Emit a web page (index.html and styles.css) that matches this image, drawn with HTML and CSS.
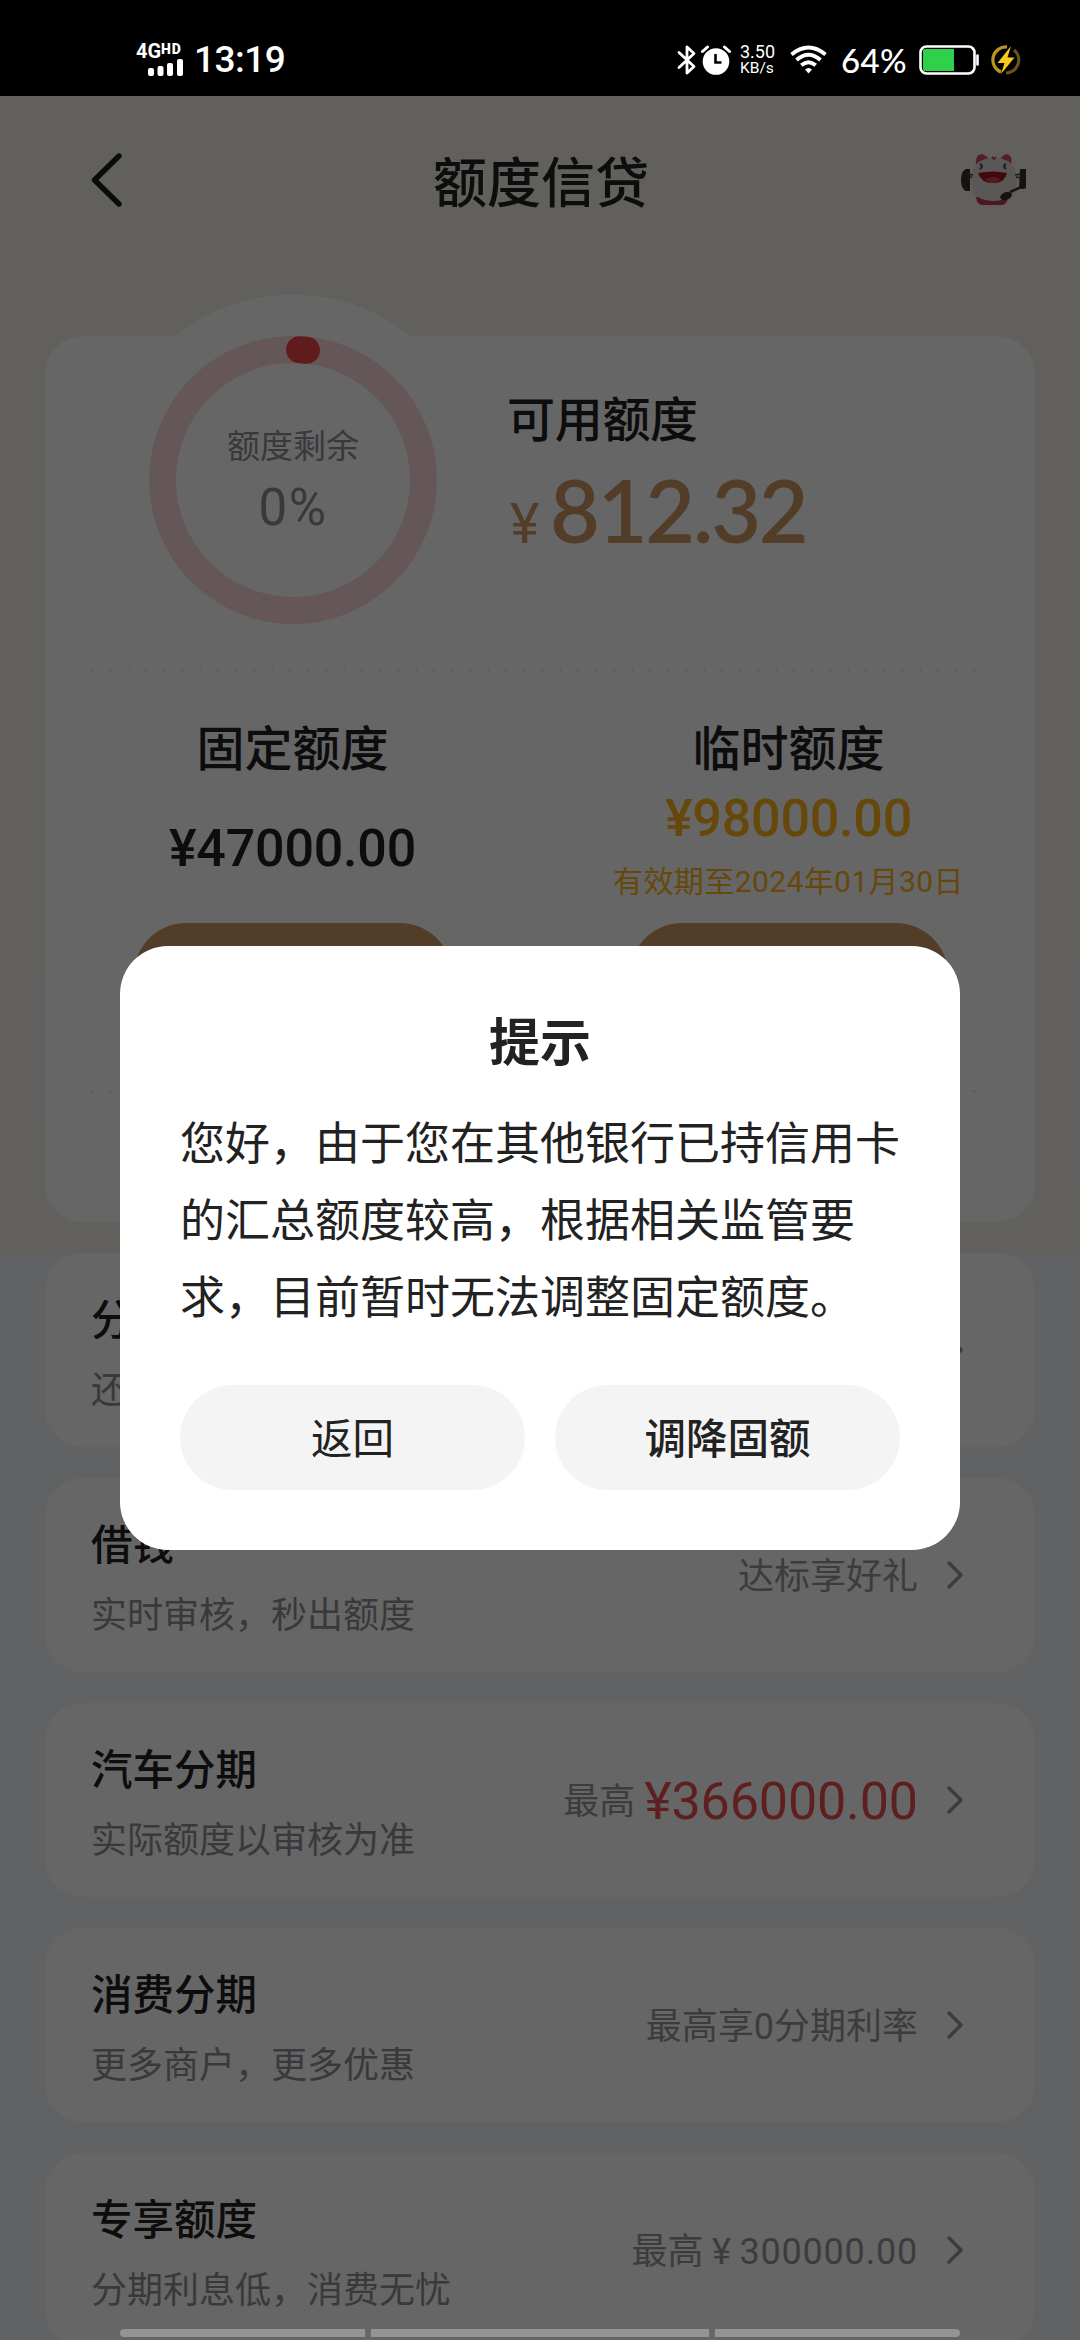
FILE: index.html
```html
<!DOCTYPE html>
<html lang="zh-CN">
<head>
<meta charset="utf-8">
<title>额度信贷</title>
<link rel="stylesheet" href="styles.css">
</head>
<body>
<div class="phone">
  <header class="status">
    <div class="status-left">
      <div class="signal">
        <div class="net"><span class="net-4g">4G</span><span class="net-hd">HD</span></div>
        <svg class="bars" width="36" height="17" viewBox="0 0 36 17" fill="#fff"><rect x="0" y="9" width="6" height="8" rx="2"/><rect x="9.5" y="7" width="6" height="10" rx="2"/><rect x="19" y="4" width="6" height="13" rx="2"/><rect x="29" y="0" width="6" height="17" rx="2"/></svg>
      </div>
      <span class="clock">13:19</span>
    </div>
    <div class="status-right">
      <svg class="bt" width="20" height="30" viewBox="0 0 20 30" fill="none" stroke="#fff" stroke-width="2.8" stroke-linejoin="round" stroke-linecap="round"><path d="M2 7.500L17 21.500L10 28V2L17 8.500L2 22.500"/></svg>
      <svg class="alarm" width="30" height="30" viewBox="0 0 30 30"><circle cx="15" cy="16.500" r="13.300" fill="#fff"/><path d="M1.500 6.500L6.500 2M28.500 6.500L23.500 2" stroke="#fff" stroke-width="3" stroke-linecap="round"/><path d="M14.500 9V17.500H20.500" fill="none" stroke="#000" stroke-width="2.600"/></svg>
      <div class="speed"><span>3.50</span><span>KB/s</span></div>
      <svg class="wifi" width="37" height="30" viewBox="0 0 37 30" fill="none" stroke="#fff" stroke-width="3.800"><path d="M1.500 9.500Q18.500 -4.500 35.500 9.500"/><path d="M6.500 15Q18.500 4.500 30.500 15"/><path d="M11.300 20.300Q18.500 14 25.700 20.300"/><path d="M15 24.500Q18.500 21.500 22 24.500L18.500 28.500Z" fill="#fff" stroke="none"/></svg>
      <span class="pct">64%</span>
      <svg class="battery" width="62" height="30" viewBox="0 0 62 30"><rect x="1.500" y="1.500" width="54" height="27" rx="6" fill="none" stroke="#fff" stroke-width="2.600"/><path d="M6 4H35V26H6A2 2 0 0 1 4 24V6A2 2 0 0 1 6 4Z" fill="#2fd14c"/><path d="M58.500 9.500V20.500" stroke="#fff" stroke-width="2.600"/></svg>
      <svg class="charge" width="30" height="30" viewBox="0 0 30 30"><path d="M16 2A13 13 0 0 0 10 27" fill="none" stroke="#bb9426" stroke-width="3.200"/><path d="M23 5A13 13 0 0 1 15 28" fill="none" stroke="#6b5417" stroke-width="3.200"/><path d="M20 1L6.500 18H13.500L10 29L23.500 12.500H16.500Z" fill="#f9c922"/></svg>
    </div>
  </header>

  <main class="page">
    <div class="titlebar">
      <svg class="back" width="34" height="58" viewBox="0 0 34 58" fill="none" stroke="#1d1d1d" stroke-width="5.400" stroke-linecap="round" stroke-linejoin="round"><path d="M31 5L6.500 29L31 53"/></svg>
      <h1>额度信贷</h1>
      <svg class="mascot" width="68" height="56" viewBox="0 0 68 56">
        <path d="M16 14Q15 3 21 2Q27 3 30 9Z" fill="#cf4b66"/><path d="M51 14Q53 3 47 2Q42 3 39 9Z" fill="#cf4b66"/>
        <path d="M34 6C18 6 13 14 11 24C9 36 15 52 34 53C53 52 59 36 57 24C55 14 50 6 34 6Z" fill="#e0dcda"/>
        <path d="M6 17H10V39H6Q1 37 1 28Q1 19 6 17Z" fill="#33302f"/><path d="M60 17H66V36Q63 38 59 36Z" fill="#33302f"/>
        <path d="M18 21Q33 18 47 21Q45 31 33 31Q21 31 18 21Z" fill="#a51420"/><path d="M25 28Q33 22 41 28Q33 33 25 28Z" fill="#d64550"/>
        <path d="M20 12Q24 14 20 17M46 12Q42 14 46 17" fill="none" stroke="#4a4543" stroke-width="2"/><path d="M32 5L34 7L36 5" stroke="#cf4b66" stroke-width="2" fill="none"/>
        <path d="M7 22L13 23M7 26L12 25M61 22L55 23M61 26L56 25" stroke="#4a4543" stroke-width="1.500"/>
        <path d="M16 45H48Q47 53 42 53H22Q17 53 16 45Z" fill="#bd3b55"/><path d="M14 41H50Q45 49 34 49Q20 49 14 41Z" fill="#e0dcda"/>
        <path d="M62 34Q56 38 50 40" stroke="#33302f" stroke-width="2.500" fill="none"/><ellipse cx="46" cy="44" rx="6" ry="3.800" transform="rotate(-20 46 44)" fill="#33302f"/>
      </svg>
    </div>

    <section class="quota card">
      <div class="summary">
        <div class="gauge">
          <svg class="gauge-ring" width="372" height="372" viewBox="0 0 372 372" fill="none"><circle cx="186" cy="186" r="185.500" fill="#fff"/><circle cx="186" cy="186" r="130.500" stroke="#fdd9d9" stroke-width="27"/><path d="M192.500 55.660A130.500 130.500 0 0 1 199.500 56.200" stroke="#f04848" stroke-width="27" stroke-linecap="round"/></svg>
          <div class="gauge-text"><span class="gauge-label">额度剩余</span><span class="gauge-value">0%</span></div>
        </div>
        <div class="available">
          <h2>可用额度</h2>
          <div class="amount"><span class="yen">¥</span><span class="num">812.32</span></div>
        </div>
      </div>
      <svg class="dots" width="900" height="4"><path d="M2 2H886" stroke="#e9e9e9" stroke-width="3" stroke-linecap="round" stroke-dasharray="0.010 18"/></svg>
      <div class="columns">
        <div class="col">
          <h2>固定额度</h2>
          <div class="col-body"><span class="money">¥47000.00</span></div>
          <span class="pill"></span>
        </div>
        <div class="col">
          <h2>临时额度</h2>
          <div class="col-body temp"><span class="money">¥98000.00</span><span class="valid">有效期至2024年01月30日</span></div>
          <span class="pill"></span>
        </div>
      </div>
      <svg class="dots" width="900" height="4"><path d="M2 2H886" stroke="#e9e9e9" stroke-width="3" stroke-linecap="round" stroke-dasharray="0.010 18"/></svg>
    </section>

    <section class="card item">
      <div class="item-main"><h3>分期</h3><p>还款</p></div>
      <svg class="chev" width="18" height="30" viewBox="0 0 18 30"><path d="M3 3L15 15L3 27"/></svg>
    </section>
    <section class="card item">
      <div class="item-main"><h3>借钱</h3><p>实时审核，秒出额度</p></div>
      <span class="hint">达标享好礼</span>
      <svg class="chev" width="18" height="30" viewBox="0 0 18 30"><path d="M3 3L15 15L3 27"/></svg>
    </section>
    <section class="card item">
      <div class="item-main"><h3>汽车分期</h3><p>实际额度以审核为准</p></div>
      <span class="hint">最高</span><span class="red">¥366000.00</span>
      <svg class="chev" width="18" height="30" viewBox="0 0 18 30"><path d="M3 3L15 15L3 27"/></svg>
    </section>
    <section class="card item">
      <div class="item-main"><h3>消费分期</h3><p>更多商户，更多优惠</p></div>
      <span class="hint">最高享0分期利率</span>
      <svg class="chev" width="18" height="30" viewBox="0 0 18 30"><path d="M3 3L15 15L3 27"/></svg>
    </section>
    <section class="card item">
      <div class="item-main"><h3>专享额度</h3><p>分期利息低，消费无忧</p></div>
      <span class="hint">最高<span class="hint-yen">¥</span><span class="hint-num">300000.00</span></span>
      <svg class="chev" width="18" height="30" viewBox="0 0 18 30"><path d="M3 3L15 15L3 27"/></svg>
    </section>
  </main>

  <div class="mask"></div>
  <div class="dialog">
    <h2>提示</h2>
    <p>您好，由于您在其他银行已持信用卡的汇总额度较高，根据相关监管要求，目前暂时无法调整固定额度。</p>
    <div class="actions"><button class="btn">返回</button><button class="btn strong">调降固额</button></div>
  </div>
  <div class="navbar"><i></i><i></i><i></i></div>
</div>
</body>
</html>
```
FILE: styles.css
```css
* { box-sizing: border-box; margin: 0; padding: 0; }
html, body { width: 1080px; height: 2340px; overflow: hidden; }
body { font-family: Roboto, "Noto Sans CJK SC", sans-serif; color: #222; background: #000; }
h1, h2, h3 { font-weight: 500; }
svg { display: block; flex: none; }
span { white-space: nowrap; }

.phone { position: relative; width: 1080px; height: 2340px; overflow: hidden; }

/* status bar */
.status { height: 96px; background: #000; color: #fff; display: flex; justify-content: space-between; padding: 24px 59px 0 136px; }
.status-left, .status-right { display: flex; align-items: center; height: 72px; }
.signal { width: 48px; height: 32px; margin-right: 10px; display: flex; flex-direction: column; align-items: flex-end; }
.net { display: flex; align-items: flex-start; width: 48px; height: 15px; font-weight: 700; }
.net-4g { font-size: 20px; line-height: 15px; letter-spacing: 0; width: 25px; }
.net-hd { font-size: 14px; line-height: 10px; font-weight: 900; letter-spacing: 1px; }
.clock { font-size: 37px; line-height: 74px; font-weight: 500; letter-spacing: -.5px; }
.bt { margin-right: 4px; }
.alarm { margin-right: 9px; }
.speed { display: flex; flex-direction: column; width: 38px; font-size: 18px; line-height: 17px; margin-right: 12px; }
.speed span + span { font-size: 15.500px; }
.wifi { margin-right: 14px; }
.pct { font: 500 33px/72px Lato, sans-serif; width: 66px; margin-right: 12px; letter-spacing: .4px; }
.battery { margin-right: 10px; }

/* page */
.page { height: 2244px; display: flex; flex-direction: column; align-items: center; gap: 31px; overflow: hidden;
  background: linear-gradient(#f3efe6 0, #f3efe6 760px, #f4f1ec 960px, #f4f2eb 1155px, #f2f5f8 1165px, #f2f5f8 100%); }
.titlebar { width: 1080px; height: 209px; flex: none; display: flex; align-items: flex-start; justify-content: space-between; padding: 0 52px 0 88px; }
.titlebar h1 { font-size: 54px; line-height: 80px; margin-top: 49px; }
.back { margin-top: 55px; }
.mascot { margin-top: 56px; }
.card { width: 990px; background: #fff; border-radius: 38px; flex: none; }

.quota { height: 886px; display: flex; flex-direction: column; align-items: center; }
.summary { width: 990px; height: 332px; display: flex; }
.gauge { position: relative; width: 372px; height: 372px; margin: -42px 0 0 62px; flex: none; }
.gauge-text { position: absolute; inset: 0; display: flex; flex-direction: column; align-items: center; color: #8f8f93; }
.gauge-label { font-size: 33px; line-height: 44px; margin-top: 131px; }
.gauge-value { font-size: 51px; line-height: 60px; margin-top: 9px; letter-spacing: 1.500px; }
.available { padding: 53px 0 0 28px; }
h2 { font-size: 48px; line-height: 64px; }
.available h2 { letter-spacing: -.3px; }
.amount { display: flex; align-items: baseline; color: #cc9868; margin-top: 12px; }
.yen { font-size: 56px; line-height: 90px; font-weight: 400; width: 43px; padding-left: 3px; }
.num { font-family: Lato, sans-serif; font-weight: 600; font-size: 86px; line-height: 90px; letter-spacing: -2.200px; }
.columns { display: flex; width: 990px; margin-top: 46px; height: 371px; }
.col { width: 495px; display: flex; flex-direction: column; align-items: center; }
.col:nth-child(2) { padding-left: 2px; }
.col-body { height: 141px; width: 480px; display: flex; flex-direction: column; align-items: center; padding-top: 37px; }
.col-body.temp { padding-top: 7px; color: #ffb31a; }
.money { font-size: 52px; line-height: 60px; font-weight: 500; letter-spacing: -.2px; }
.valid { font-size: 30px; line-height: 40px; margin-top: 13px; letter-spacing: .4px; }
.pill { width: 318px; height: 104px; border-radius: 52px; background: #cc9868; }

.item { height: 194px; display: flex; align-items: center; padding: 0 71px 0 46px; }
.item-main { flex: 1; align-self: flex-start; }
.item h3 { font-size: 41.500px; line-height: 56px; margin-top: 40px; }
.item p { font-size: 36px; line-height: 48px; margin-top: 18px; color: #8f9096; }
.hint { font-size: 36px; line-height: 50px; color: #96979c; margin: 4px 28px 0 0; }
.hint:has(+ .red) { margin-right: 9px; }
.red { font-size: 52px; line-height: 60px; color: #e84f4f; margin: 3px 28px 0 0; letter-spacing: -.1px; }
.hint-yen { display: inline-block; width: 36px; text-align: center; }
.hint-num { letter-spacing: .8px; }
.chev { fill: none; stroke: #96979c; stroke-width: 3.500; stroke-linecap: round; stroke-linejoin: round; }

/* dialog */
.mask { position: absolute; left: 0; top: 96px; right: 0; bottom: 0; background: rgba(0, 0, 0, .6); }
.dialog { position: absolute; left: 120px; top: 946px; width: 840px; height: 604px; background: #fff; border-radius: 48px; padding: 65px 60px 0; }
.dialog h2 { text-align: center; font-size: 51px; line-height: 66px; font-weight: 700; }
.dialog p { font-size: 45px; line-height: 77px; margin: 29px -10px 0 0; width: 725px; }
.actions { display: flex; gap: 30px; margin-top: 48px; }
.btn { flex: 1; height: 105px; border: 0; border-radius: 53px; background: #f4f4f4; color: #222; padding-top: 4px; font: 400 41.500px/101px Roboto, "Noto Sans CJK SC", sans-serif; }
.btn.strong { font-weight: 500; }

.navbar { position: absolute; left: 120px; top: 2329px; width: 840px; height: 8px; display: grid; grid-template-columns: 245px 1fr 245px; gap: 6px; border-radius: 4px; overflow: hidden; }
.navbar i { background: #949494; }
```
